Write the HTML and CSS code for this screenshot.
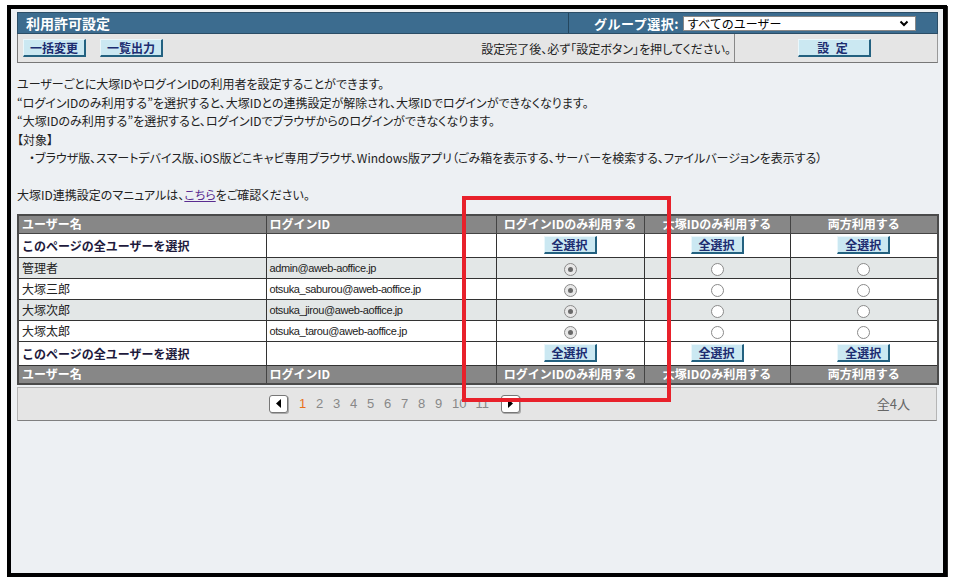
FILE: index.html
```html
<!DOCTYPE html>
<html lang="ja">
<head>
    <meta charset="UTF-8">
    <title>利用許可設定</title>
    <link rel="stylesheet" href="styles.css">
</head>
<body>
    <div class="screen">
        <div class="panel">
            <div class="titlebar">
                <div class="title">利用許可設定</div>
                <div class="group">
                    <span class="group-label">グループ選択:</span>
                    <div class="group-select">
                        <span>すべてのユーザー</span>
                        <svg width="10" height="7" viewBox="0 0 10 7"><path d="M1.5 1.5 L5 5 L8.5 1.5" fill="none" stroke="#000" stroke-width="2"/></svg>
                    </div>
                </div>
            </div>
            <div class="toolbar">
                <div class="tool-left">
                    <button class="btn">一括変更</button>
                    <button class="btn">一覧出力</button>
                    <span class="notice">設定完了後、必ず「設定ボタン」を押してください。</span>
                </div>
                <div class="tool-right">
                    <button class="btn btn-set">設 定</button>
                </div>
            </div>
        </div>

        <div class="desc">
            ユーザーごとに大塚IDやログインIDの利用者を設定することができます。<br>
            “ログインIDのみ利用する”を選択すると、大塚IDとの連携設定が解除され、大塚IDでログインができなくなります。<br>
            “大塚IDのみ利用する”を選択すると、ログインIDでブラウザからのログインができなくなります。<br>
            【対象】<br>
            <span class="indent">・ブラウザ版、スマートデバイス版、iOS版どこキャビ専用ブラウザ、Windows版アプリ（ごみ箱を表示する、サーバーを検索する、ファイルバージョンを表示する）</span><br>
            <br>
            大塚ID連携設定のマニュアルは、<a href="#" class="manual">こちら</a>をご確認ください。
        </div>

        <table class="users">
            <colgroup>
                <col style="width: 248px">
                <col style="width: 230px">
                <col style="width: 148px">
                <col style="width: 146px">
                <col style="width: 148px">
            </colgroup>
            <tr class="head">
                <th>ユーザー名</th>
                <th>ログインID</th>
                <th class="c">ログインIDのみ利用する</th>
                <th class="c">大塚IDのみ利用する</th>
                <th class="c">両方利用する</th>
            </tr>
            <tr class="select-all">
                <td class="bold">このページの全ユーザーを選択</td>
                <td></td>
                <td class="c"><button class="btn btn-small">全選択</button></td>
                <td class="c"><button class="btn btn-small">全選択</button></td>
                <td class="c"><button class="btn btn-small">全選択</button></td>
            </tr>
            <tr class="row alt">
                <td>管理者</td>
                <td class="mail">admin@aweb-aoffice.jp</td>
                <td class="c"><span class="radio on"></span></td>
                <td class="c"><span class="radio"></span></td>
                <td class="c"><span class="radio"></span></td>
            </tr>
            <tr class="row">
                <td>大塚三郎</td>
                <td class="mail">otsuka_saburou@aweb-aoffice.jp</td>
                <td class="c"><span class="radio on"></span></td>
                <td class="c"><span class="radio"></span></td>
                <td class="c"><span class="radio"></span></td>
            </tr>
            <tr class="row alt">
                <td>大塚次郎</td>
                <td class="mail">otsuka_jirou@aweb-aoffice.jp</td>
                <td class="c"><span class="radio on"></span></td>
                <td class="c"><span class="radio"></span></td>
                <td class="c"><span class="radio"></span></td>
            </tr>
            <tr class="row">
                <td>大塚太郎</td>
                <td class="mail">otsuka_tarou@aweb-aoffice.jp</td>
                <td class="c"><span class="radio on"></span></td>
                <td class="c"><span class="radio"></span></td>
                <td class="c"><span class="radio"></span></td>
            </tr>
            <tr class="select-all">
                <td class="bold">このページの全ユーザーを選択</td>
                <td></td>
                <td class="c"><button class="btn btn-small">全選択</button></td>
                <td class="c"><button class="btn btn-small">全選択</button></td>
                <td class="c"><button class="btn btn-small">全選択</button></td>
            </tr>
            <tr class="head">
                <th>ユーザー名</th>
                <th>ログインID</th>
                <th class="c">ログインIDのみ利用する</th>
                <th class="c">大塚IDのみ利用する</th>
                <th class="c">両方利用する</th>
            </tr>
        </table>

        <div class="pager">
            <div class="pages">
                <span class="arrow"><svg width="6" height="9" viewBox="0 0 6 9"><path d="M5 0 L0 4.5 L5 9 Z" fill="#000"/></svg></span>
                <span class="num current">1</span>
                <span class="num">2</span>
                <span class="num">3</span>
                <span class="num">4</span>
                <span class="num">5</span>
                <span class="num">6</span>
                <span class="num">7</span>
                <span class="num">8</span>
                <span class="num">9</span>
                <span class="num">10</span>
                <span class="num">11</span>
                <span class="arrow next"><svg width="6" height="9" viewBox="0 0 6 9"><path d="M1 0 L6 4.5 L1 9 Z" fill="#000"/></svg></span>
            </div>
            <span class="total">全4人</span>
        </div>
    </div>

    <div class="highlight"></div>
</body>
</html>
```

FILE: styles.css
```css
body {
    margin: 0;
    background-color: #fff;
    font-family: "Noto Sans CJK JP", "Noto Sans", sans-serif;
    font-size: 12px;
    color: #222;
}
.screen {
    box-sizing: border-box;
    margin: 5px 0 0 7px;
    width: 940px;
    height: 572px;
    padding: 3px 5px 0 6px;
    border: 4px solid #000;
    box-shadow: 1px 1px 0 #222;
    background-color: #edf0f3;
}
.panel {
    width: 921px;
}
.titlebar {
    display: flex;
    height: 22px;
    box-sizing: border-box;
    background-color: #3c6c8f;
    border: 1px solid #2b4d66;
    color: #fff;
    font-weight: bold;
}
.title {
    width: 551px;
    padding-left: 8px;
    font-size: 14px;
    line-height: 20px;
    border-right: 1px solid #24465e;
    box-sizing: border-box;
}
.group {
    flex: 1;
    display: flex;
    align-items: center;
    justify-content: flex-end;
    padding-right: 21px;
    font-size: 13px;
}
.group-label {
    margin-right: 4px;
    letter-spacing: 0.5px;
}
.group-select {
    display: flex;
    align-items: center;
    justify-content: space-between;
    width: 233px;
    height: 15px;
    box-sizing: border-box;
    padding: 0 6px 0 3px;
    background-color: #fff;
    border: 1px solid #888;
    color: #000;
    font-weight: normal;
    font-size: 12px;
    line-height: 13px;
}
.toolbar {
    display: flex;
    height: 29px;
    box-sizing: border-box;
    background-color: #e5e5e5;
    border: 1px solid #777;
    border-top: none;
    border-right-color: #999;
}
.tool-left {
    width: 717px;
    display: flex;
    align-items: center;
    padding-left: 5px;
    box-sizing: border-box;
    border-right: 1px solid #888;
}
.tool-right {
    flex: 1;
    display: flex;
    align-items: center;
    justify-content: center;
    padding-right: 4px;
}
.notice {
    margin-left: auto;
    padding-right: 3px;
    color: #222;
    font-feature-settings: "palt";
}
.btn {
    font-family: "Noto Sans CJK JP", sans-serif;
    font-size: 12px;
    font-weight: bold;
    color: #1c2c70;
    background-color: #cbe8f2;
    border-style: solid;
    border-width: 1px 2px 2px 1px;
    border-color: #eaf7fb #236180 #236180 #eaf7fb;
    padding: 0 6px;
    height: 18px;
    line-height: 14px;
    margin-right: 14px;
    cursor: pointer;
}
.btn-set {
    width: 73px;
    margin: 0;
    letter-spacing: 2px;
}
.desc {
    margin-top: 12px;
    line-height: 18.5px;
    font-feature-settings: "palt";
    color: #222;
}
.indent {
    padding-left: 12px;
}
.manual {
    color: #5a2d91;
}
.users {
    margin-top: 9px;
    width: 920px;
    table-layout: fixed;
    border-collapse: collapse;
    border: 2px solid #4a4a4a;
}
.users th,
.users td {
    border: 1px solid #333;
    padding: 0 3px;
    text-align: left;
    white-space: nowrap;
    overflow: hidden;
}
.users .c {
    text-align: center;
}
.head th {
    height: 17px;
    background-color: #878787;
    color: #fff;
    font-weight: bold;
    font-size: 12px;
    line-height: 16px;
    border-color: #444;
}
.select-all td {
    height: 23px;
    background-color: #fff;
}
.bold {
    font-weight: bold;
    color: #1e1a3c;
}
.row td {
    height: 20px;
    background-color: #fff;
}
.row.alt td {
    background-color: #e3e7e7;
}
.mail {
    font-family: "Liberation Sans", Arial, sans-serif;
    font-size: 11px;
    letter-spacing: -0.4px;
}
.btn-small {
    margin: 0;
    width: 53px;
    padding: 0;
}
.radio {
    display: inline-block;
    width: 11px;
    height: 11px;
    border: 1px solid #8a8a8a;
    border-radius: 50%;
    background-color: #fff;
    vertical-align: middle;
    position: relative;
}
.radio.on {
    background-color: #e8e8e8;
}
.radio.on::after {
    content: "";
    position: absolute;
    left: 3px;
    top: 3px;
    width: 5px;
    height: 5px;
    border-radius: 50%;
    background-color: #6a6a6a;
}
.pager {
    display: flex;
    align-items: center;
    margin-top: 2px;
    width: 920px;
    height: 34px;
    box-sizing: border-box;
    padding-left: 251px;
    padding-right: 26px;
    background-color: #e5e5e5;
    border: 1px solid #b5b5b5;
    border-bottom-color: #808080;
}
.pages {
    display: flex;
    align-items: center;
}
.arrow {
    display: flex;
    align-items: center;
    justify-content: center;
    width: 19px;
    height: 18px;
    box-sizing: border-box;
    background-color: #fff;
    border: 1px solid #777;
    border-radius: 3px;
    box-shadow: 1px 1px 0 #aaa;
}
.arrow.next {
    margin-left: 8px;
}
.num {
    font-family: "Liberation Sans", Arial, sans-serif;
    font-size: 13px;
    color: #888;
    margin: 0 4px 0 5px;
    min-width: 8px;
}
.num.current {
    color: #e8711c;
    margin-left: 11px;
}
.total {
    margin-left: auto;
    color: #666;
    font-size: 13px;
}
.highlight {
    position: absolute;
    left: 462px;
    top: 196px;
    width: 201px;
    height: 198px;
    border: 4px solid #e8212b;
}
```
